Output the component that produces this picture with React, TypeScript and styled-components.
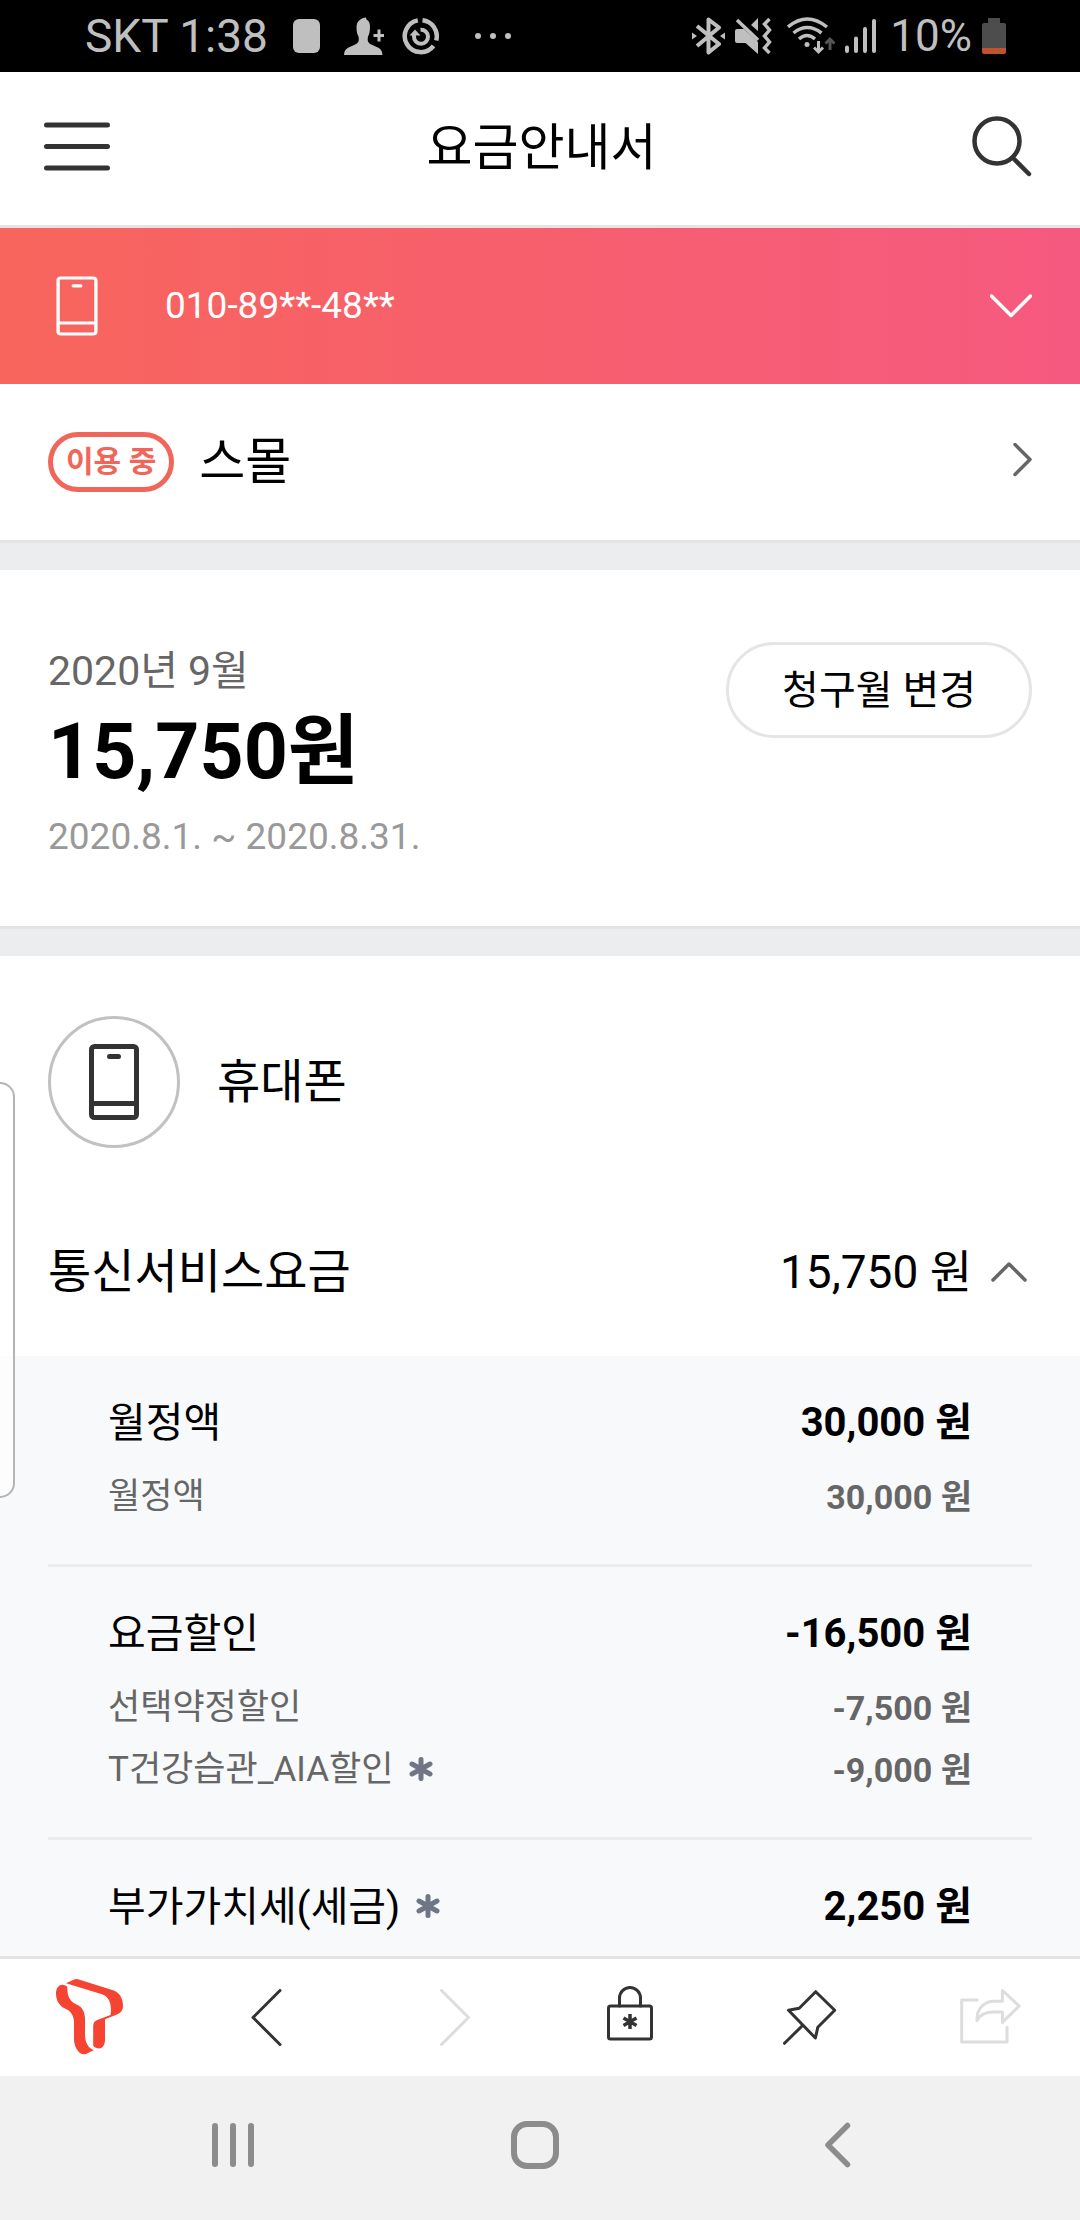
import React, { useState } from "react";
import styled, { createGlobalStyle } from "styled-components";

const GlobalStyle = createGlobalStyle`
  *, *::before, *::after { box-sizing: border-box; }
  body {
    margin: 0;
    background: #fff;
    color: #000;
    font-family: Roboto, "Noto Sans CJK KR", sans-serif;
  }
  h1, h2, p, dl, dt, dd { margin: 0; font-weight: 400; }
  button { border: 0; padding: 0; background: none; color: inherit; font: inherit; cursor: pointer; }
  a { color: inherit; text-decoration: none; }
  svg { display: block; flex: none; }
`;

const Screen = styled.div`
  position: relative;
  display: flex;
  flex-direction: column;
  height: 100vh;
`;

const StatusBar = styled.div`
  flex: none;
  display: flex;
  align-items: center;
  justify-content: space-between;
  height: 72px;
  padding: 0 74px 0 85px;
  background: #000;
  color: #bfbfbf;
  font-size: 44px;
  line-height: 72px;
`;

const StatusGroup = styled.div<{ $gap: number }>`
  display: flex;
  align-items: center;
  gap: ${(p) => p.$gap}px;
`;

const Clock = styled.span`
  margin-right: 7px;
  font-size: 46px;
`;

const Header = styled.header`
  flex: none;
  display: flex;
  align-items: center;
  justify-content: space-between;
  padding: 0 48px 0 43px;
  border-bottom: 3px solid #e4e4e4;
  color: #333;
`;

const PageTitle = styled.h1`
  padding: 40px 0 41px;
  font-size: 50px;
  line-height: 72px;
  color: #000;
`;

const Content = styled.main`
  flex: 1;
  min-height: 0;
  overflow-y: auto;
  scrollbar-width: none;
`;

const LineBar = styled.button`
  display: flex;
  align-items: center;
  width: 100%;
  padding: 48px;
  background: linear-gradient(90deg, #f8655c, #f6597f);
  color: #fff;
  font-size: 37px;
  line-height: 60px;
  text-align: left;
`;

const LineNumber = styled.span`
  flex: 1;
  padding-left: 67px;
`;

const PhoneGlyph = styled.span`
  padding-left: 8px;
`;

const Gap = styled.div`
  height: 30px;
  border-top: 3px solid #e4e4e4;
  background: #ecedef;
`;

const PlanLink = styled.a`
  display: flex;
  align-items: center;
  gap: 25px;
  padding: 48px;
  font-size: 50px;
  line-height: 60px;
`;

const PlanName = styled.span`
  flex: 1;
`;

const Badge = styled.span`
  padding: 0 13px;
  border: 5px solid #f1665a;
  border-radius: 30px;
  color: #f1665a;
  font-size: 30px;
  font-weight: 700;
  line-height: 50px;
`;

const Summary = styled.section`
  display: flex;
  align-items: flex-start;
  justify-content: space-between;
  padding: 72px 48px 56px;
`;

const Month = styled.p`
  font-size: 41px;
  line-height: 58px;
  color: #666;
`;

const Total = styled.p`
  font-size: 77px;
  font-weight: 700;
  line-height: 104px;
`;

const Period = styled.p`
  font-size: 37px;
  line-height: 66px;
  color: #999;
`;

const PillButton = styled.button`
  padding: 2px 53px 0;
  border: 3px solid #e5e5e5;
  border-radius: 48px;
  font-size: 40px;
  line-height: 88px;
`;

const ProductHead = styled.div`
  display: flex;
  align-items: center;
  gap: 37px;
  padding: 60px 48px 40px;
`;

const ProductIcon = styled.span`
  display: flex;
  align-items: center;
  justify-content: center;
  width: 132px;
  height: 132px;
  border: 3px solid #c1c1c1;
  border-radius: 50%;
  color: #333;
`;

const ProductName = styled.h2`
  font-size: 47px;
  line-height: 64px;
`;

const FoldButton = styled.button`
  display: flex;
  align-items: center;
  gap: 19px;
  width: 100%;
  padding: 52px 48px;
  font-size: 46px;
  line-height: 64px;
  text-align: left;
`;

const FoldLabel = styled.span`
  flex: 1;
  font-size: 47px;
`;

const Details = styled.div`
  padding: 0 48px;
  background: #f8f9fb;
`;

const Group = styled.dl`
  display: flex;
  flex-direction: column;
  padding: 36px 60px;

  & + & { border-top: 3px solid #ebecee; }
`;

const Row = styled.div<{ $main?: boolean }>`
  display: flex;
  justify-content: space-between;
  margin-bottom: ${(p) => (p.$main ? 12 : 0)}px;
  font-size: ${(p) => (p.$main ? 41 : 35)}px;
  line-height: 62px;
  color: ${(p) => (p.$main ? "#000" : "#666")};

  &:last-child { margin-bottom: 0; }
`;

const RowName = styled.dt`
  display: flex;
  align-items: center;
  gap: 16px;
`;

const RowAmount = styled.dd<{ $main?: boolean }>`
  font-size: ${(p) => (p.$main ? 40 : 34)}px;
  font-weight: 700;
`;

const Toolbar = styled.nav`
  flex: none;
  display: flex;
  border-top: 3px solid #e4e4e4;
  background: #fff;
`;

const Tool = styled.button`
  flex: 1;
  display: flex;
  align-items: center;
  justify-content: center;
  height: 117px;
  color: #333;

  &:disabled { color: #ddd; cursor: default; }
`;

const SystemNav = styled.nav`
  flex: none;
  display: flex;
  padding: 0 92px 0 82px;
  background: #f1f1f1;
`;

const SystemKey = styled.button`
  flex: 1;
  display: flex;
  align-items: center;
  justify-content: center;
  height: 144px;
  padding-bottom: 6px;
  color: #8c8c8c;
`;

const EdgeHandle = styled.div`
  position: absolute;
  top: 1082px;
  left: 0;
  width: 15px;
  height: 416px;
  border: 2px solid #b4b4b4;
  border-left: 0;
  border-radius: 0 15px 15px 0;
  background: rgba(255, 255, 255, 0.7);
`;

const stroke = {
  fill: "none",
  stroke: "currentColor",
  strokeLinecap: "round" as const,
  strokeLinejoin: "round" as const,
};

const Phone = ({ width, height, weight }: { width: number; height: number; weight: number }) => (
  <svg width={width} height={height} viewBox="0 0 50 76" preserveAspectRatio="none" {...stroke} strokeWidth={weight}>
    <rect x="2.5" y="2.5" width="45" height="71" rx="3" />
    <path d="M3 59.5H47M20.5 12.5H29.5" />
  </svg>
);

const Asterisk = () => (
  <svg width="24" height="27" viewBox="0 0 24 27" fill="none" stroke="#6f7786" strokeWidth="5" strokeLinecap="round">
    <path d="M12 2.5V21.5M3 7L21 17M21 7L3 17" />
  </svg>
);

type Item = { name: string; amount: string; note?: boolean };

const groups: Item[][] = [
  [
    { name: "월정액", amount: "30,000 원" },
    { name: "월정액", amount: "30,000 원" },
  ],
  [
    { name: "요금할인", amount: "-16,500 원" },
    { name: "선택약정할인", amount: "-7,500 원" },
    { name: "T건강습관_AIA할인", amount: "-9,000 원", note: true },
  ],
  [{ name: "부가가치세(세금)", amount: "2,250 원", note: true }],
];

const StatusIconsLeft = () => (
  <>
    <svg width="33" height="38" viewBox="0 0 33 38" fill="#bfbfbf">
      <rect x="0" y="2" width="27" height="34" rx="6" />
    </svg>
    <svg width="40" height="38" viewBox="0 0 40 38" fill="#bfbfbf">
      <path d="M22 .5C17 1 12.500 4 12.500 10C12.500 14 13 17 14.500 19.500C15.500 25 14 26.500 9 28.500C3 31 .5 32 0 38H38.500C38 32 35.500 31 29.500 28.500C24.500 26.500 23 25 24 19.500C25.500 17 26 14 26 10C26 6 25 4 22.500 2.500Z" />
      <path d="M33.500 12.500h3v4.500h4v3h-4v4.500h-3V20h-4v-3h4Z" />
    </svg>
    <svg width="37" height="38" viewBox="0 0 37 38" fill="none" stroke="#bfbfbf" strokeWidth="4.500">
      <path d="M20.500 3.300A16 16 0 0 1 34.200 23.500M31.500 28.800A16 16 0 1 1 15.800 3.400" />
      <path d="M18.500 12.800A7 7 0 1 1 12 19.500V17" strokeWidth="4" />
      <path d="M7.500 18.500L13 12.500L18.500 18.500Z" fill="#bfbfbf" stroke="none" />
    </svg>
    <svg width="54" height="38" viewBox="0 0 54 38" fill="#bfbfbf">
      <circle cx="21" cy="19" r="3" />
      <circle cx="36" cy="19" r="3" />
      <circle cx="51" cy="19" r="3" />
    </svg>
  </>
);

const StatusIconsRight = () => (
  <>
    <svg width="33" height="38" viewBox="0 0 33 38" fill="none" stroke="#bfbfbf" strokeWidth="4" strokeLinejoin="round">
      <path d="M5 9L27 27L16.500 35.500V2.500L27 10.500L5 29" />
      <path d="M0 15.500L5 19L0 22.500ZM33 15.500L28 19L33 22.500Z" fill="#bfbfbf" stroke="none" />
    </svg>
    <svg width="42" height="38" viewBox="0 0 42 38" fill="#bfbfbf">
      <path d="M2 12H9L23 25V37L10.500 26H2Q0 26 0 24V14Q0 12 2 12ZM16 8L23 1V14Z" />
      <path d="M2 3L23 23M34.500 2L29.500 7L34.500 13L29.500 19L34.500 25L29.500 31L34.500 36" fill="none" stroke="#bfbfbf" strokeWidth="3.500" />
    </svg>
    <svg width="48" height="38" viewBox="0 0 48 38" fill="none" stroke="#bfbfbf" strokeWidth="3.500">
      <path d="M1 10Q20 -6 40 10M6.500 16Q20 5 34.500 16M12 22Q20 15 28 22" />
      <circle cx="20" cy="27.500" r="2.500" fill="#bfbfbf" stroke="none" />
      <path d="M31.500 24V35M27 30.500L31.500 35L36 30.500" strokeWidth="3" />
      <path d="M43 33V22M38.500 26.500L43 22L47.500 26.500" stroke="#555" strokeWidth="3" />
    </svg>
    <svg width="35" height="38" viewBox="0 0 35 38" fill="none" stroke="#bfbfbf" strokeWidth="4" strokeLinecap="round">
      <path d="M2 30.500V34M11 21.500V34M20 12V34M29 4V34" />
    </svg>
    <span>10%</span>
    <svg width="24" height="38" viewBox="0 0 24 38">
      <path d="M6 1H18V6H22Q24 6 24 8V31H0V8Q0 6 2 6H6Z" fill="#4d4d4d" />
      <path d="M0 31H24V35Q24 37 22 37H2Q0 37 0 35Z" fill="#c0532f" />
    </svg>
  </>
);

export default function App() {
  const [open, setOpen] = useState(true);

  return (
    <Screen>
      <GlobalStyle />
      <StatusBar>
        <StatusGroup $gap={18}>
          <Clock>SKT 1:38</Clock>
          <StatusIconsLeft />
        </StatusGroup>
        <StatusGroup $gap={10}>
          <StatusIconsRight />
        </StatusGroup>
      </StatusBar>

      <Header>
        <button type="button" aria-label="메뉴">
          <svg width="68" height="62" viewBox="0 0 68 62" {...stroke} strokeWidth="5">
            <path d="M3.500 7H64.500M3.500 28.500H64.500M3.500 50H64.500" />
          </svg>
        </button>
        <PageTitle>요금안내서</PageTitle>
        <button type="button" aria-label="검색">
          <svg width="60" height="69" viewBox="0 0 60 69" {...stroke} strokeWidth="4.500">
            <circle cx="25" cy="27" r="22.500" />
            <path d="M41.500 44.500L57 60" />
          </svg>
        </button>
      </Header>

      <Content>
        <LineBar type="button" aria-haspopup="listbox">
          <PhoneGlyph>
            <Phone width={42} height={60} weight={4} />
          </PhoneGlyph>
          <LineNumber>010-89**-48**</LineNumber>
          <svg width="42" height="24" viewBox="0 0 42 24" {...stroke} strokeWidth="3.500">
            <path d="M1.500 2L21 21.500L40.500 2" />
          </svg>
        </LineBar>

        <PlanLink href="#plan">
          <Badge>이용 중</Badge>
          <PlanName>스몰</PlanName>
          <svg width="19" height="38" viewBox="0 0 19 38" {...stroke} stroke="#666" strokeWidth="3.500">
            <path d="M2 1.500L17 16.500L2 31.500" />
          </svg>
        </PlanLink>
        <Gap />

        <Summary>
          <div>
            <Month>2020년 9월</Month>
            <Total>15,750원</Total>
            <Period>2020.8.1. ~ 2020.8.31.</Period>
          </div>
          <PillButton type="button">청구월 변경</PillButton>
        </Summary>
        <Gap />

        <section>
          <ProductHead>
            <ProductIcon>
              <Phone width={50} height={76} weight={5} />
            </ProductIcon>
            <ProductName>휴대폰</ProductName>
          </ProductHead>
          <FoldButton type="button" aria-expanded={open} onClick={() => setOpen(!open)}>
            <FoldLabel>통신서비스요금</FoldLabel>
            <span>15,750 원</span>
            <svg width="41" height="20" viewBox="0 0 41 20" {...stroke} stroke="#666" strokeWidth="3.500">
              <path d={open ? "M2 18L18 2L34 18" : "M2 2L18 18L34 2"} />
            </svg>
          </FoldButton>
          {open && (
            <Details>
              {groups.map((items, g) => (
                <Group key={g}>
                  {items.map((item, i) => (
                    <Row key={i} $main={i === 0}>
                      <RowName>
                        {item.name}
                        {item.note && <Asterisk />}
                      </RowName>
                      <RowAmount $main={i === 0}>{item.amount}</RowAmount>
                    </Row>
                  ))}
                </Group>
              ))}
            </Details>
          )}
        </section>
      </Content>

      <Toolbar>
        <Tool type="button" aria-label="T world">
          <svg width="68" height="77" viewBox="0 0 68 77" fill="#f54432">
            <path d="M0 14.500C0 9 3 5.800 6.500 5.800C8.500 5.800 10.500 6.800 11.300 8C11 17 14 23 21.700 26C26 28 29 33 29 40V56C29 63 32 69.500 38 71L30 75C23 77 18 68 18 60V43C18 37 14.500 31.500 9 29.500C3 27 0 21 0 14.500Z" />
            <path d="M10 4.300L17 1Q20 -.3 22 .3L57 11.300C64 13.500 67 20 67 27C67 31 65 34 61 35.500L49 40.300V61C49 66 46 69.500 43 69.500C41 69.500 38.500 68.500 37.200 66.700V47C37.200 43.500 39 41.500 42.500 40.500L54.500 36C56 27 54 18 46 15.300Z" />
          </svg>
        </Tool>
        <Tool type="button" aria-label="뒤로">
          <svg width="38" height="58" viewBox="0 0 38 58" {...stroke} strokeWidth="3">
            <path d="M29 1.500L2 28.500L29 55.500" />
          </svg>
        </Tool>
        <Tool type="button" aria-label="앞으로" disabled>
          <svg width="44" height="58" viewBox="0 0 44 58" {...stroke} strokeWidth="3">
            <path d="M13.500 1.500L40.500 28.500L13.500 55.500" />
          </svg>
        </Tool>
        <Tool type="button" aria-label="잠금">
          <svg width="46" height="63" viewBox="0 0 46 63" {...stroke} strokeWidth="3">
            <rect x="1.500" y="20" width="43" height="33" rx="2" />
            <path d="M12.500 20V12A10.500 10.500 0 0 1 33.500 12V20" />
            <path d="M23 28V43M16.500 32L29.500 39.500M29.500 32L16.500 39.500" strokeWidth="3.500" strokeLinecap="butt" />
          </svg>
        </Tool>
        <Tool type="button" aria-label="고정">
          <svg width="54" height="56" viewBox="0 0 54 56" {...stroke} strokeWidth="3">
            <path d="M32.700 1.700L51.700 20.300L34.800 37.300L32.400 48L5.500 20.300L16.200 18.300ZM19.300 35.700L1.500 53.300" />
          </svg>
        </Tool>
        <Tool type="button" aria-label="공유" disabled>
          <svg width="61" height="58" viewBox="0 0 61 58" {...stroke} strokeWidth="3">
            <path d="M17.200 11H1.700V53H47V38.300" />
            <path d="M42.400 1.500L59.200 17L42.400 33.300V23H34C26 23 19.500 26 17 31.700C16.500 20 24 12.300 34 12.300H42.400Z" />
          </svg>
        </Tool>
      </Toolbar>

      <SystemNav>
        <SystemKey type="button" aria-label="최근 앱">
          <svg width="42" height="46" viewBox="0 0 42 46" {...stroke} strokeWidth="6">
            <path d="M3 4V42M21 4V42M39 4V42" />
          </svg>
        </SystemKey>
        <SystemKey type="button" aria-label="홈">
          <svg width="48" height="48" viewBox="0 0 48 48" {...stroke} strokeWidth="6">
            <rect x="3" y="3" width="42" height="42" rx="13" />
          </svg>
        </SystemKey>
        <SystemKey type="button" aria-label="이전">
          <svg width="27" height="46" viewBox="0 0 27 46" {...stroke} strokeWidth="5.500">
            <path d="M23.500 3.500L4 23L23.500 42.500" />
          </svg>
        </SystemKey>
      </SystemNav>

      <EdgeHandle />
    </Screen>
  );
}
